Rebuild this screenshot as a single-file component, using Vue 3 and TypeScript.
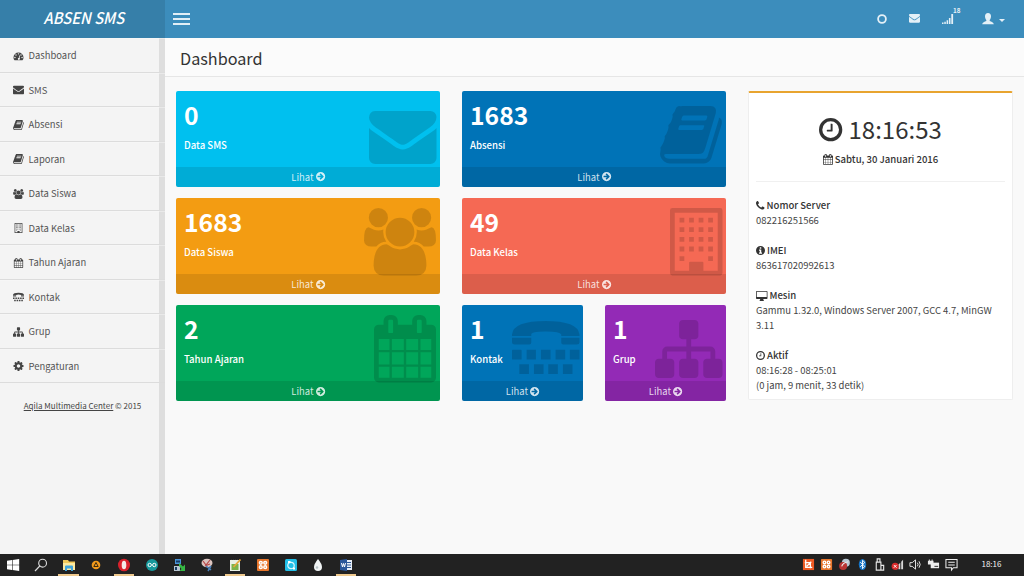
<script setup lang="ts">
interface Glyph { box: string; d: string }

const glyphs: Record<string, Glyph> = {
  gauge: {
    box: '0 0 1792 1792',
    d: 'M0 1152a896 896 0 0 1 1792 0q0 261-141 483-19 29-54 29h-1402q-35 0-54-29-141-221-141-483zM384 1152a128 128 0 1 0-256 0 128 128 0 1 0 256 0zM576 704a128 128 0 1 0-256 0 128 128 0 1 0 256 0zM1024 512a128 128 0 1 0-256 0 128 128 0 1 0 256 0zM1472 704a128 128 0 1 0-256 0 128 128 0 1 0 256 0zM1664 1152a128 128 0 1 0-256 0 128 128 0 1 0 256 0zM1185 787l-62-16-62 48-101 382a192 192 0 1 0 124 32l101-382z',
  },
  envelope: {
    box: '0 256 1792 1408',
    d: 'M1792 710v794q0 66-47 113t-113 47h-1472q-66 0-113-47t-47-113v-794q44 49 101 87 362 246 497 345 57 42 92.5 65.5t94.5 48 110 24.5h2q51 0 110-24.5t94.5-48 92.5-65.5q170-123 498-345 57-39 100-87zm0-294q0 79-49 151t-122 123q-376 261-468 325-10 7-42.5 31t-54 38.5-52 32.5-57.5 27-50 9h-2q-23 0-50-9t-57.5-27-52-32.5-54-38.5-42.5-31q-91-64-262-182.5t-205-142.5q-62-42-117-115.5t-55-136.5q0-78 41.5-130t118.5-52h1472q65 0 112.5 47t47.5 113z',
  },
  book: {
    box: '64 128 1664 1536',
    d: 'M1703 478q40 57 18 129l-275 906q-19 64-76.5 107.5t-122.5 43.5h-923q-77 0-148.5-53.5t-99.5-131.5q-24-67-2-127 0-4 3-27t4-37q1-8-3-21.5t-3-19.5q2-11 8-21t16.5-23.5 16.5-23.5q23-38 45-91.5t30-91.5q3-10 .5-30t-.5-28q3-11 17-28t17-23q21-36 42-92t25-90q1-9-2.5-32t.5-28q4-13 22-30.5t22-22.5q19-26 42.5-84.5t27.5-96.5q1-8-3-25.5t-2-26.5q2-8 9-18t18-23 17-21q8-12 16.5-30.5t15-35 16-36 19.5-32 26.5-23.5 36-11.5 47.5 5.5l-1 3q38-9 51-9h761q74 0 114 56t18 130l-274 906q-36 119-71.5 153.5t-128.500 34.500h-869q-27 0-38 15-11 16-1 43 24 70 144 70h923q29 0 56-15.500t35-41.500l300-987q7-22 5-57 38 15 59 43zm-1064 2q-4 13 2 22.500t20 9.500h608q13 0 25.500-9.500t16.500-22.500l21-64q4-13-2-22.500t-20-9.500h-608q-13 0-25.500 9.500t-16.500 22.500zm-83 256q-4 13 2 22.500t20 9.500h608q13 0 25.500-9.500t16.500-22.500l21-64q4-13-2-22.500t-20-9.500h-608q-13 0-25.500 9.500t-16.500 22.500z',
  },
  users: {
    box: '0 0 1920 1792',
    d: 'M593 896q-162 5-265 128h-134q-82 0-138-40.5t-56-118.5q0-353 124-353 6 0 43.5 21t97.5 42.5 119 21.5q67 0 133-23-5 37-5 66 0 139 81 256zm1071 637q0 120-73 189.5t-194 69.5h-874q-121 0-194-69.5t-73-189.5q0-53 3.5-103.5t14-109 26.5-108.5 43-97.5 62-81 85.5-53.5 111.5-20q10 0 43 21.5t73 48 107 48 135 21.5 135-21.5 107-48 73-48 43-21.5q61 0 111.5 20t85.5 53.5 62 81 43 97.5 26.5 108.5 14 109 3.5 103.5zm-1024-1277q0 106-75 181t-181 75-181-75-75-181 75-181 181-75 181 75 75 181zm704 384q0 159-112.5 271.5t-271.5 112.5-271.5-112.5-112.5-271.5 112.5-271.5 271.5-112.5 271.5 112.5 112.5 271.5zm576 225q0 78-56 118.5t-138 40.5h-134q-103-123-265-128 81-117 81-256 0-29-5-66 66 23 133 23 59 0 119-21.5t97.5-42.5 43.5-21q124 0 124 353zm-128-609q0 106-75 181t-181 75-181-75-75-181 75-181 181-75 181 75 75 181z',
  },
  building: {
    box: '0 0 1408 1792',
    d: 'M64 0h1280q64 0 64 64v1664q0 64-64 64h-1280q-64 0-64-64v-1664q0-64 64-64zM128 128v1536h384v-212q0-28 28-28h328q28 0 28 28v212h384v-1536z'
      + [256, 512, 768, 1024, 1280].map((y) => [256, 512, 768, 1024]
        .filter((x) => y < 1280 || x === 256 || x === 1024)
        .map((x) => `M${x} ${y}h128v128h-128z`).join('')).join(''),
  },
  calendar: {
    box: '0 0 1664 1792',
    d: 'M128 1664h288v-288h-288zM480 1664h320v-288h-320zM864 1664h320v-288h-320zM1248 1664h288v-288h-288zM128 1312h288v-320h-288zM480 1312h320v-320h-320zM864 1312h320v-320h-320zM1248 1312h288v-320h-288zM128 928h288v-288h-288zM480 928h320v-288h-320zM864 928h320v-288h-320zM1248 928h288v-288h-288zM512 448v-288q0-32-32-32h-64q-32 0-32 32v288q0 32 32 32h64q32 0 32-32zM1280 448v-288q0-32-32-32h-64q-32 0-32 32v288q0 32 32 32h64q32 0 32-32zM1664 384v1280q0 52-38 90t-90 38h-1408q-52 0-90-38t-38-90v-1280q0-52 38-90t90-38h128v-96q0-66 47-113t113-47h64q66 0 113 47t47 113v96h384v-96q0-66 47-113t113-47h64q66 0 113 47t47 113v96h128q52 0 90 38t38 90z',
  },
  tty: {
    box: '0 0 203 158',
    d: 'M0 45v-5Q4 0 101 0t102 40v5h-55v-5Q145 31 101 31T58 40v5zM0 50h58v14q0 6-6 6h-44q-8 0-8-6zM148 50h55v14q0 6-8 6h-41q-6 0-6-6zM0 88q0-2 2-2h25q2 0 2 2v25q0 2-2 2h-25q-2 0-2-2zM44 86h28v29h-28zM87 86h29v29h-29zM131 86h29v29h-29zM174 86h29v29h-29zM22 129h29v29h-29zM66 129h29v29h-29zM109 129h29v29h-29zM153 129h29v29h-29z',
  },
  sitemap: {
    box: '0 128 1792 1536',
    d: 'M1792 1248v320q0 40-28 68t-68 28h-320q-40 0-68-28t-28-68v-320q0-40 28-68t68-28h96v-192h-512v192h96q40 0 68 28t28 68v320q0 40-28 68t-68 28h-320q-40 0-68-28t-28-68v-320q0-40 28-68t68-28h96v-192h-512v192h96q40 0 68 28t28 68v320q0 40-28 68t-68 28h-320q-40 0-68-28t-28-68v-320q0-40 28-68t68-28h96v-192q0-52 38-90t90-38h512v-192h-96q-40 0-68-28t-28-68v-320q0-40 28-68t68-28h320q40 0 68 28t28 68v320q0 40-28 68t-68 28h-96v192h512q52 0 90 38t38 90v192h96q40 0 68 28t28 68z',
  },
  cog: {
    box: '128 128 1536 1536',
    d: 'M1152 896q0-106-75-181t-181-75-181 75-75 181 75 181 181 75 181-75 75-181zm512-109v222q0 12-8 23t-20 13l-185 28q-19 54-39 91 35 50 107 138 10 12 10 25t-9 23q-27 37-99 108t-94 71q-12 0-26-9l-138-108q-44 23-91 38-16 136-29 186-7 28-36 28h-222q-14 0-24.5-8.5t-11.5-21.5l-28-184q-49-16-90-37l-141 107q-10 9-25 9-14 0-25-11-126-114-165-168-7-10-7-23 0-12 8-23 15-21 51-66.5t54-70.5q-27-50-41-99l-183-27q-13-2-21-12.5t-8-23.5v-222q0-12 8-23t19-13l186-28q14-46 39-92-40-57-107-138-10-12-10-24 0-10 9-23 26-36 98.5-107.5t94.5-71.5q13 0 26 10l138 107q44-23 91-38 16-136 29-186 7-28 36-28h222q14 0 24.5 8.5t11.5 21.5l28 184q49 16 90 37l142-107q9-9 24-9 13 0 25 10 129 119 165 170 7 8 7 22 0 12-8 23-15 21-51 66.5t-54 70.5q26 50 41 98l183 28q13 2 21 12.5t8 23.5z',
  },
  arrow: {
    box: '128 128 1536 1536',
    d: 'M1413 896q0-27-18-45l-91-91-362-362q-18-18-45-18t-45 18l-91 91q-18 18-18 45t18 45l189 189h-502q-26 0-45 19t-19 45v128q0 26 19 45t45 19h502l-189 189q-19 19-19 45t19 45l91 91q18 18 45 18t45-18l362-362 91-91q18-18 18-45zM1664 896a768 768 0 1 1-1536 0 768 768 0 1 1 1536 0z',
  },
  phone: {
    box: '192 256 1408 1408',
    d: 'M1600 1368q0 27-10 70.5t-21 68.5q-21 50-122 106-94 51-186 51-27 0-53-3.5t-57.5-12.5-47-14.5-55.5-20.5-49-18q-98-35-175-83-127-79-264-216t-216-264q-48-77-83-175-3-9-18-49t-20.5-55.5-14.5-47-12.5-57.5-3.5-53q0-92 51-186 56-101 106-122 25-11 68.5-21t70.5-10q14 0 21 3 18 6 53 76 11 19 30 54t35 63.5 31 53.5q3 4 17.5 25t21.5 35.5 7 28.5q0 20-28.5 50t-62 55-62 53-28.5 46q0 9 5 22.5t8.5 20.5 14 24 11.5 19q76 137 174 235t235 174q2 1 19 11.5t24 14 20.5 8.5 22.5 5q18 0 46-28.5t53-62 55-62 50-28.5q14 0 28.5 7t35.5 21.5 25 17.5q25 15 53.5 31t63.5 35 54 30q70 35 76 53 3 7 3 21z',
  },
  clock: {
    box: '0 0 24 24',
    d: 'M12 0a12 12 0 1 0 0 24 12 12 0 1 0 0-24zM12 3.4a8.6 8.6 0 1 1 0 17.2 8.6 8.6 0 1 1 0-17.2zM12 6h1.5q.5 0 .5.5v7q0 .5-.5.5h-5q-.5 0-.5-.5v-1q0-.5.5-.5H12z',
  },
  info: {
    box: '0 0 24 24',
    d: 'M12 0a12 12 0 1 0 0 24 12 12 0 1 0 0-24zM10 3.5h4v3.5h-4zM8 9.5h6v8h2v3h-8v-3h2v-5h-2z',
  },
  desktop: {
    box: '0 0 30 26',
    d: 'M2 0h26q2 0 2 2v17q0 2-2 2h-9q0 2 1.500 3.500v1.500h-11v-1.500q1.500-1.500 1.500-3.500h-9q-2 0-2-2v-17q0-2 2-2zM2 2v13.500h26v-13.500z',
  },
}

const menu = [
  { icon: 'gauge', label: 'Dashboard' },
  { icon: 'envelope', label: 'SMS' },
  { icon: 'book', label: 'Absensi' },
  { icon: 'book', label: 'Laporan' },
  { icon: 'users', label: 'Data Siswa' },
  { icon: 'building', label: 'Data Kelas' },
  { icon: 'calendar', label: 'Tahun Ajaran' },
  { icon: 'tty', label: 'Kontak' },
  { icon: 'sitemap', label: 'Grup' },
  { icon: 'cog', label: 'Pengaturan' },
]

const cards = [
  { icon: 'envelope', value: '0', label: 'Data SMS', tone: 'aqua' },
  { icon: 'book', value: '1683', label: 'Absensi', tone: 'blue' },
  { icon: 'users', value: '1683', label: 'Data Siswa', tone: 'orange' },
  { icon: 'building', value: '49', label: 'Data Kelas', tone: 'red' },
  { icon: 'calendar', value: '2', label: 'Tahun Ajaran', tone: 'green' },
  { icon: 'tty', value: '1', label: 'Kontak', tone: 'blue half' },
  { icon: 'sitemap', value: '1', label: 'Grup', tone: 'purple half' },
]

const details = [
  { icon: 'phone', title: 'Nomor Server', lines: ['082216251566'] },
  { icon: 'info', title: 'IMEI', lines: ['863617020992613'] },
  { icon: 'desktop', title: 'Mesin', lines: ['Gammu 1.32.0, Windows Server 2007, GCC 4.7, MinGW 3.11'] },
  { icon: 'clock', title: 'Aktif', lines: ['08:16:28 - 08:25:01', '(0 jam, 9 menit, 33 detik)'] },
]
</script>

<template>
  <div class="screen">
    <header class="top">
      <div class="brand"><span>ABSEN SMS</span></div>
      <nav class="bar">
        <div class="burger"><i></i><i></i><i></i></div>
        <div class="tools">
          <svg class="ring" viewBox="0 0 10 10"><circle cx="5" cy="5" r="3.9" /></svg>
          <svg class="mail" :viewBox="glyphs.envelope.box"><path :d="glyphs.envelope.d" /></svg>
          <div class="signal">
            <svg viewBox="0 0 12 10"><path d="M0 8.500h1.500v1.500h-1.500zM2.300 7.700h1.500v2.300h-1.500zM4.600 6.200h1.500v3.800h-1.500zM6.900 4h1.600v6h-1.600zM9.300 0h1.800v10h-1.800z" /></svg>
            <sup>18</sup>
          </div>
          <svg class="user" viewBox="0 0 12 12"><path d="M6 0C4 0 3 1.300 3 3.300c0 1.500.5 2.800 1.300 3.600v1C2.500 8.700.500 9 .2 11.300h11.600C11.500 9 9.500 8.700 7.700 7.900v-1C8.500 6.100 9 4.800 9 3.300 9 1.300 8 0 6 0z" /></svg>
          <i class="caret"></i>
        </div>
      </nav>
    </header>

    <div class="body">
      <aside class="side">
        <a v-for="item in menu" :key="item.label" class="item">
          <svg :class="['mini', item.icon]" :viewBox="glyphs[item.icon].box"><path fill-rule="evenodd" :d="glyphs[item.icon].d" /></svg>
          <span>{{ item.label }}</span>
        </a>
        <p class="credit"><u>Aqila Multimedia Center</u> © 2015</p>
      </aside>

      <main class="main">
        <h1>Dashboard</h1>
        <div class="content">
          <section class="cards">
            <article v-for="card in cards" :key="card.label" :class="['card', card.tone]">
              <strong>{{ card.value }}</strong>
              <p>{{ card.label }}</p>
              <svg :class="['big', card.icon]" :viewBox="glyphs[card.icon].box" preserveAspectRatio="none"><path fill-rule="evenodd" :d="glyphs[card.icon].d" /></svg>
              <footer>Lihat<svg viewBox="128 128 1536 1536"><path fill-rule="evenodd" :d="glyphs.arrow.d" /></svg></footer>
            </article>
          </section>

          <section class="panel">
            <div class="time">
              <svg :viewBox="glyphs.clock.box"><path fill-rule="evenodd" :d="glyphs.clock.d" /></svg>
              <span>18:16:53</span>
            </div>
            <div class="date">
              <svg :viewBox="glyphs.calendar.box"><path fill-rule="evenodd" :d="glyphs.calendar.d" /></svg>
              <span>Sabtu, 30 Januari 2016</span>
            </div>
            <hr />
            <div v-for="d in details" :key="d.title" class="detail">
              <b><svg :class="d.icon" :viewBox="glyphs[d.icon].box"><path fill-rule="evenodd" :d="glyphs[d.icon].d" /></svg>{{ d.title }}</b>
              <p v-for="line in d.lines" :key="line">{{ line }}</p>
            </div>
          </section>
        </div>
      </main>
    </div>

    <footer class="taskbar">
      <div class="apps">
        <span><svg viewBox="0 0 14 14"><path fill="#fff" d="M1 2.800l5-.8v4.700H1zM6.600 1.900l6.600-1v5.800H6.600zM1 7.300h5V12l-5-.8zM6.600 7.300h6.600v5.800l-6.600-1z" /></svg></span>
        <span><svg viewBox="0 0 14 14"><g fill="none" stroke="#ddd" stroke-width="1.100"><circle cx="8.600" cy="5.200" r="3.900" /><path d="M5.800 8L1 13" /></g></svg></span>
        <span class="open"><svg viewBox="0 0 14 14"><path fill="#efc85a" d="M1 2h5l1 1.500h6V12H1z" /><path fill="#fbe9a0" d="M1 5h12v7H1z" /><path fill="#3fa4dc" d="M3 8.500Q3 7.500 4 7.500h6q1 0 1 1V13H9v-2.500H5V13H3z" /></svg></span>
        <span><svg viewBox="0 0 14 14"><circle cx="7" cy="7" r="4.300" fill="#f29a1c" /><path fill="none" stroke="#3a2a10" d="M7 4.500L4.800 8.500h4.400z" /></svg></span>
        <span class="open"><svg viewBox="0 0 14 14"><ellipse cx="7" cy="7" rx="6" ry="6.300" fill="#d9202b" /><ellipse cx="7" cy="7" rx="2.300" ry="4.300" fill="#f4e9e8" /></svg></span>
        <span><svg viewBox="0 0 14 14"><circle cx="7" cy="7" r="6" fill="#16989c" /><g fill="none" stroke="#fff"><circle cx="4.700" cy="7" r="1.700" /><circle cx="9.300" cy="7" r="1.700" /></g></svg></span>
        <span><svg viewBox="0 0 14 14"><path fill="#4b94d8" d="M2 1h6v5H2z" /><path fill="#b9c6d2" d="M1 8h6v5H1z" /><path fill="#173c65" d="M3 2.500h4v2H3zM2 9h2v3H2z" /><path fill="#36b845" d="M6 5l4 3.500 2-2V13H6.500l2-2L6 8z" /></svg></span>
        <span><svg viewBox="0 0 14 14"><ellipse cx="7" cy="5" rx="5.500" ry="4.200" fill="#dcc5c0" /><path stroke="#b94848" stroke-width="1.200" fill="none" d="M3 3l3 4 4-5M5 8l5-2" /><path stroke="#4c83bc" stroke-width="1.500" fill="none" d="M6 8l5 4M11 8l-3 5" /></svg></span>
        <span class="open"><svg viewBox="0 0 14 14"><path fill="#e9efe5" d="M2 2h10v11H2z" /><path fill="#7bb34a" d="M3.500 6h7v6h-7z" /><path stroke="#e5a63a" stroke-width="1.800" d="M5.500 9L12.500 1.500" /><path stroke="#333" d="M3 1.500h8" stroke-dasharray="1" /></svg></span>
        <span><svg viewBox="0 0 14 14"><rect x="1" y="1" width="12" height="12" rx="1" fill="#e8762c" /><g fill="none" stroke="#fff" stroke-width="1.500"><circle cx="4.800" cy="4.800" r="1.400" /><circle cx="9.200" cy="4.800" r="1.400" /><circle cx="4.800" cy="9.200" r="1.400" /><circle cx="9.200" cy="9.200" r="1.400" /></g></svg></span>
        <span><svg viewBox="0 0 14 14"><rect x="1" y="1" width="12" height="12" rx="1.500" fill="#22bfe8" /><circle cx="7" cy="7.500" r="3.200" fill="none" stroke="#d8f7ff" stroke-width="1.200" /><path fill="#fff" d="M4 3h2.500v2H4zM9 9.500h2v2H9z" /></svg></span>
        <span><svg viewBox="0 0 14 14"><path fill="#f1f4f5" d="M7 1q4 5 4 8a4 4 0 0 1-8 0q0-3 4-8z" /><circle cx="6" cy="9.500" r="1.300" fill="#b9c5c9" /></svg></span>
        <span class="open"><svg viewBox="0 0 14 14"><path fill="#e7eef7" d="M7 2h6v10H7z" /><path stroke="#2b5797" d="M8 4.500h4M8 7h4M8 9.500h4" /><path fill="#2a579a" d="M1 2l7-1v12l-7-1z" /><path fill="none" stroke="#fff" d="M2.500 5l1 4 1-3.500 1 3.500 1-4" /></svg></span>
      </div>
      <div class="tray">
        <span><svg viewBox="0 0 14 14"><rect x="1" y="1" width="12" height="12" fill="#ee5a24" /><path fill="none" stroke="#fff" stroke-width="1.400" d="M4 2v8h7M3 5h6v6M5 9l5-5" /></svg></span>
        <span><svg viewBox="0 0 14 14"><rect x="1" y="1" width="12" height="12" rx="1" fill="#e8762c" /><g fill="none" stroke="#fff" stroke-width="1.500"><circle cx="4.800" cy="4.800" r="1.400" /><circle cx="9.200" cy="4.800" r="1.400" /><circle cx="4.800" cy="9.200" r="1.400" /><circle cx="9.200" cy="9.200" r="1.400" /></g></svg></span>
        <span><svg viewBox="0 0 14 14"><circle cx="8.500" cy="5" r="4.300" fill="#b9c7d2" /><circle cx="5.500" cy="8.500" r="4.300" fill="#b93534" /><path fill="none" stroke="#eee" stroke-width="1.200" d="M4 9q1-4 7-5" /></svg></span>
        <span><svg viewBox="0 0 14 14"><ellipse cx="7" cy="7" rx="4" ry="6" fill="#1674c6" /><path fill="none" stroke="#fff" d="M4.500 4.500l5 4.500-2.500 2.500v-9l2.500 2.300-5 4.700" /></svg></span>
        <span><svg viewBox="0 0 14 14"><path fill="none" stroke="#e8e8e8" stroke-width="1.200" d="M3.500 4.500h5V13h-5zM4.500 4.500V1h3v3.500M8.500 8h3v5h-3" /></svg></span>
        <span><svg viewBox="0 0 14 14"><path fill="#d8d8d8" d="M13 2v10h-2V4zM10 5v7H8V7zM7 8v4H5V9.500z" /><circle cx="4.500" cy="9" r="3.800" fill="#d92b2b" /><path stroke="#fff" d="M3 7.500l3 3M6 7.500l-3 3" /></svg></span>
        <span><svg viewBox="0 0 14 14"><path fill="none" stroke="#eee" d="M1 5h2.500L7 2v10L3.500 9H1zM9 5q1.500 2 0 4M10.800 3.500q2.500 3.500 0 7" /></svg></span>
        <span><svg viewBox="0 0 14 14"><path fill="#eee" d="M4 5h9v6H4z" /><path fill="#eee" d="M1 3h6v4H1zM2 1.500h1V3H2zM5 1.500h1V3H5z" /><path stroke="#222" d="M8 9h4" /></svg></span>
        <span><svg viewBox="0 0 14 14"><path fill="none" stroke="#eee" stroke-width="1.100" d="M1 1.500h12v9H9L7 13v-2.500H1zM3.500 4.500h7M3.500 7.500h7" /></svg></span>
      </div>
      <time>18:16</time>
    </footer>
  </div>
</template>

<style>
html, body { margin: 0; overflow: hidden; }
</style>

<style scoped>
* { box-sizing: border-box; }
.screen { width: 1024px; height: 576px; display: flex; flex-direction: column; background: #f9f9f9; font-family: "Noto Sans CJK SC", "Noto Sans", sans-serif; font-size: 9.450px; line-height: 15px; color: #333; overflow: hidden; }
svg { display: block; fill: currentColor; flex: none; overflow: visible; }
p { margin: 0; }
.top { height: 37.500px; display: flex; flex: none; }
.brand { width: 165px; background: #367fa9; color: #fff; display: flex; align-items: center; justify-content: center; padding: 0 0 3px 2px; }
.brand span { font-size: 16px; line-height: 20px; font-weight: 500; font-style: italic; letter-spacing: 0; transform: scaleX(.92); white-space: nowrap; }
.bar { flex: 1; background: #3c8dbc; display: flex; justify-content: space-between; padding: 0 19px 0 8px; color: #e4f0f7; }
.burger { width: 17px; display: flex; flex-direction: column; gap: 3.500px; padding-top: 13px; }
.burger i { height: 1.500px; background: #e1eef6; }
.tools { display: flex; align-items: center; }
.ring { width: 10px; fill: none; stroke: currentColor; stroke-width: 1.800; }
.mail { width: 11px; margin-left: 22px; }
.signal { width: 22px; margin-left: 22px; display: flex; }
.signal svg { width: 12px; height: 10px; margin-top: 1px; }
.signal sup { font-size: 6.300px; line-height: 8px; font-weight: 700; margin: -6px 0 0 -1px; }
.user { width: 12px; margin-left: 18px; }
.caret { border: 3px solid transparent; border-top-color: currentColor; border-bottom: 0; margin: 3px 0 0 5px; }
.body { flex: 1; display: flex; min-height: 0; }
.side { width: 165px; padding-top: .75px; background: #f4f4f4; box-shadow: inset -6px 0 #dedede; color: #555; }
.item { height: 34.500px; border-bottom: 1px solid #dcdcdc; box-shadow: inset 0 1px #fbfbfb66; display: flex; align-items: center; padding: 1.500px 0 0 13px; }
.item span { margin-left: 4.500px; }
.mini { width: 11px; height: 10px; color: #444; }
.credit { text-align: center; font-size: 8px; margin-top: 15px; line-height: 15px; color: #444; }
.main { flex: 1; min-width: 0; }
h1 { margin: 0; height: 39px; padding: 0 15px; background: #fbfbfb; border-bottom: 1px solid #e6e6e6; font-size: 16.200px; line-height: 40px; font-weight: 400; color: #333; }
.content { display: flex; justify-content: space-between; padding: 14.500px 11px 0; }
.cards { width: 550px; display: grid; grid-template-columns: repeat(4, 121px); column-gap: 22px; row-gap: 11.200px; }
.card { grid-column: span 2; height: 96px; border-radius: 2px; color: #fff; position: relative; overflow: hidden; padding: 5.500px 8px 0; }
.card.half { grid-column: span 1; }
.card strong { display: block; font-size: 24.700px; line-height: 34px; font-weight: 700; }
.card p { margin-top: 7px; font-size: 9.600px; font-weight: 500; position: relative; z-index: 1; }
.card footer { position: absolute; inset: auto 0 0; height: 20px; background: rgba(0, 0, 0, .1); display: flex; align-items: center; justify-content: center; gap: 2px; color: rgba(255, 255, 255, .82); }
.card footer svg { width: 9.200px; margin-top: 0; }
.big { position: absolute; right: 4px; top: 19.500px; width: 67.500px; height: 53px; color: rgba(0, 0, 0, .15); }
.big.book { width: 62px; height: 57.500px; top: 15px; right: 4px; }
.big.users { width: 72px; height: 67.500px; top: 10px; }
.big.building { width: 52.500px; height: 67.500px; top: 10px; }
.big.calendar { width: 62px; height: 67.500px; top: 10px; }
.big.tty { top: 15.500px; }
.big.sitemap { top: 15px; height: 58px; }
.aqua { background: #00c0ef; }
.blue { background: #0073b7; }
.orange { background: #f39c12; }
.red { background: #f56954; }
.green { background: #00a65a; }
.purple { background: #932ab6; }
.panel { width: 265px; height: 309px; background: #fff; border: 1px solid #eee; border-top: 2px solid #e8a42f; border-radius: 2px; padding: 19px 7px 0; }
.time { display: flex; align-items: center; justify-content: center; gap: 6px; font-size: 24px; line-height: 34px; }
.time svg { width: 23.300px; margin-top: 2px; }
.date { display: flex; justify-content: center; align-items: center; gap: 2px; margin-top: 6px; font-size: 9.550px; font-weight: 500; line-height: 15px; }
.date svg { width: 10px; }
hr { border: 0; border-top: 1px solid #f0f0f0; margin: 14px 0 16px; }
.detail { margin-bottom: 15px; color: #444; }
.detail b { display: flex; align-items: center; gap: 2px; font-size: 9.550px; font-weight: 500; color: #333; }
.detail b svg { width: 9px; }
.detail b svg.phone { width: 8.500px; }
.detail b svg.desktop { width: 11.500px; }
.taskbar { height: 22px; flex: none; background: #222; display: flex; color: #f3f3f3; }
.apps { display: flex; margin-left: -.8px; }
.apps span { width: 27.750px; display: flex; justify-content: center; padding-top: 4px; position: relative; }
.apps svg { width: 14px; height: 14px; }
.open::after { content: ""; position: absolute; left: 3.500px; right: 3.500px; bottom: 0; height: 2px; background: #efc98d; }
.tray { display: flex; margin-left: 439.500px; }
.tray span { width: 17.900px; display: flex; justify-content: center; padding-top: 4px; }
.tray svg { width: 13px; height: 13px; }
time { margin-left: 21px; font-size: 8px; line-height: 20px; }
</style>
